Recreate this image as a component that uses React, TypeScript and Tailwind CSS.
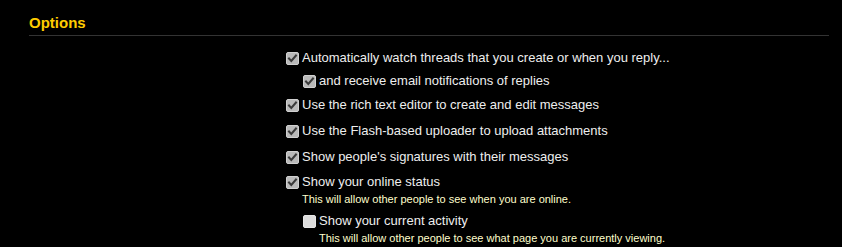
import React from 'react';

type BoxProps = { checked?: boolean };

const Box: React.FC<BoxProps> = ({ checked }) => (
  <svg width="13" height="13" viewBox="0 0 13 13" className="shrink-0">
    <rect
      x="0.5"
      y="0.5"
      width="12"
      height="12"
      rx="1.5"
      fill={checked ? '#b9b9b9' : '#dcdcdc'}
      stroke={checked ? '#d0d0d0' : '#e6e6e6'}
    />
    {checked && (
      <path d="M3 6.5 L5.3 9 L10 3.5" fill="none" stroke="#3a3a3a" strokeWidth="2" strokeLinecap="square" />
    )}
  </svg>
);

interface OptionProps {
  label: string;
  checked?: boolean;
  hint?: string;
  className?: string;
  children?: React.ReactNode;
}

const Option: React.FC<OptionProps> = ({ label, checked, hint, className, children }) => (
  <li className={className}>
    <label className="flex items-center gap-[3px] text-[13px] leading-4 text-[#eeeeee]">
      <Box checked={checked} />
      <span>{label}</span>
    </label>
    {hint && (
      <p className="pl-[16px] pt-[2px] text-[11px] leading-[14px] text-[#ffffcc]">{hint}</p>
    )}
    {children}
  </li>
);

export default function App() {
  return (
    <div
      className="w-[842px] h-[247px] bg-black overflow-hidden"
      style={{ fontFamily: '"Liberation Sans", Arial, sans-serif' }}
    >
      <div className="pl-[29px] pr-[13px] pt-[14px]">
        <h3 className="text-[15px] leading-[18px] font-bold text-[#ffcc00] pb-[3px] border-b border-[#333333]">
          Options
        </h3>
      </div>
      <ul className="pl-[286px] pt-[14px]">
        <Option label="Automatically watch threads that you create or when you reply..." checked>
          <ul className="pl-[17px] pt-[7px]">
            <Option label="and receive email notifications of replies" checked />
          </ul>
        </Option>
        <Option className="mt-[8px]" label="Use the rich text editor to create and edit messages" checked />
        <Option className="mt-[10px]" label="Use the Flash-based uploader to upload attachments" checked />
        <Option className="mt-[10px]" label="Show people's signatures with their messages" checked />
        <Option
          className="mt-[9px]"
          label="Show your online status"
          checked
          hint="This will allow other people to see when you are online."
        >
          <ul className="pl-[17px] pt-[7px]">
            <Option
              label="Show your current activity"
              hint="This will allow other people to see what page you are currently viewing."
            />
          </ul>
        </Option>
      </ul>
    </div>
  );
}
